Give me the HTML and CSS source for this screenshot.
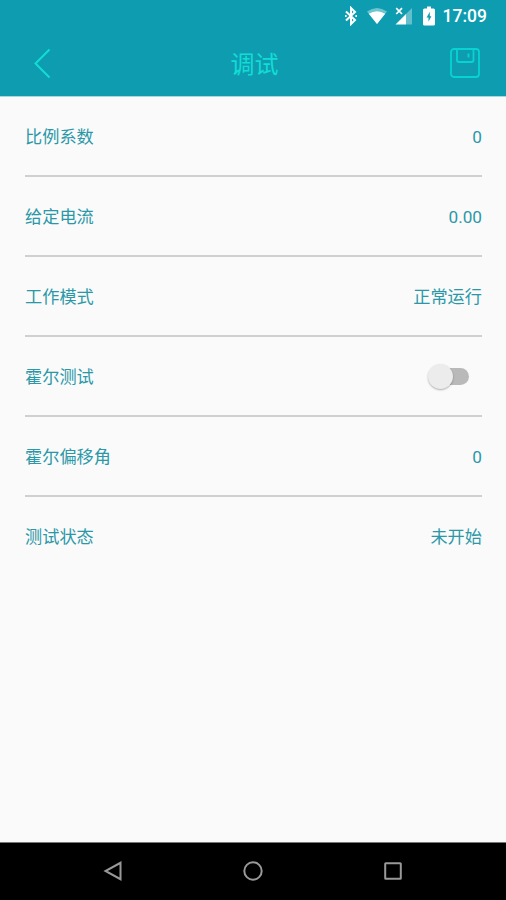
FILE: index.html
```html
<!DOCTYPE html>
<html lang="zh-CN">
<head>
    <meta charset="UTF-8">
    <meta name="viewport" content="width=device-width, initial-scale=1.0">
    <title>调试</title>
    <link rel="stylesheet" href="styles.css">
</head>
<body>

<header class="header">
    <div class="status-bar">
        <svg class="bluetooth" width="14" height="20" viewBox="0 0 14 20" fill="none" stroke="#fff" stroke-width="2">
            <path d="M2 5.5L11 14L7 18V2L11 6L2 14.5"/>
            <path d="M1 10h1.6M11.4 10H13" stroke-width="2.2"/>
        </svg>
        <svg class="wifi" width="22" height="18" viewBox="0 0 22 18" fill="#fff">
            <path d="M11 17L1 4.5Q11 -2.5 21 4.5Z" opacity="0.4"/>
            <path d="M11 17L2.8 6.8Q11 1.8 19.2 6.8Z"/>
        </svg>
        <svg class="signal" width="18" height="18" viewBox="0 0 18 18" fill="#fff">
            <path d="M17 1V17.5H11V7Z" opacity="0.35"/>
            <path d="M11 7V17.5H0.5Z"/>
            <path d="M1.2 1.2L7 7M7 1.2L1.2 7" stroke="#fff" stroke-width="1.7"/>
        </svg>
        <svg class="battery" width="12" height="20" viewBox="0 0 12 20">
            <path d="M4 0.5H8V2.5H10.5Q12 2.5 12 4V18Q12 19.5 10.5 19.5H1.5Q0 19.5 0 18V4Q0 2.5 1.5 2.5H4Z" fill="#fff"/>
            <path d="M6.8 5.8L3.6 11.6H5.5V15.8L8.4 10.2H6.8Z" fill="#0e9db0"/>
        </svg>
        <span class="time">17:09</span>
    </div>
    <div class="nav">
        <svg class="back" width="17" height="31" viewBox="0 0 17 31" fill="none" stroke="#12dcd6" stroke-width="2">
            <path d="M15.5 1.5L1.5 15.5L15.5 29.5"/>
        </svg>
        <h1>调试</h1>
        <svg class="save" width="30" height="30" viewBox="0 0 30 30" fill="none" stroke="#08d3d2" stroke-width="1.8">
            <rect x="1" y="1" width="28" height="28" rx="3"/>
            <path d="M7 1V12Q7 14 9 14H21.5Q23.5 14 23.5 12V1"/>
            <path d="M18.5 5.5V9.5"/>
        </svg>
    </div>
</header>

<main class="list">
    <div class="row">
        <span>比例系数</span>
        <span>0</span>
    </div>
    <div class="row">
        <span>给定电流</span>
        <span>0.00</span>
    </div>
    <div class="row">
        <span>工作模式</span>
        <span>正常运行</span>
    </div>
    <div class="row">
        <span>霍尔测试</span>
        <div class="switch"><div class="thumb"></div></div>
    </div>
    <div class="row">
        <span>霍尔偏移角</span>
        <span>0</span>
    </div>
    <div class="row">
        <span>测试状态</span>
        <span>未开始</span>
    </div>
</main>

<footer class="bottom-bar">
    <svg width="20" height="20" viewBox="0 0 20 20"><path d="M17.5 1.8V18.2L2.5 10Z"/></svg>
    <svg width="20" height="20" viewBox="0 0 20 20"><circle cx="10" cy="10" r="8.7"/></svg>
    <svg width="20" height="20" viewBox="0 0 20 20"><rect x="2.2" y="2.2" width="15.6" height="15.6" rx="0.5"/></svg>
</footer>

</body>
</html>
```
FILE: styles.css
```css
body {
    font-family: Roboto, "Noto Sans CJK SC", sans-serif;
    display: flex;
    flex-direction: column;
    height: 100vh;
    margin: 0;
    background-color: #fafafa;
}
.header {
    height: 97px;
    background-color: #0e9db0;
    border-bottom: 1px solid #a5d9e0;
    box-sizing: border-box;
}
.status-bar {
    display: flex;
    justify-content: flex-end;
    align-items: center;
    height: 31px;
    padding-right: 19px;
}
.wifi {
    margin-left: 8px;
}
.signal {
    margin-left: 7px;
}
.battery {
    margin-left: 10px;
}
.time {
    margin-left: 8px;
    padding-top: 2px;
    color: #fff;
    font-size: 17.5px;
    font-weight: 500;
    line-height: 29px;
}
.nav {
    display: flex;
    justify-content: space-between;
    align-items: center;
    height: 64px;
    padding: 0 26px 0 34px;
}
.nav h1 {
    margin: 0 0 0 8px;
    padding-top: 4px;
    color: #12dcd6;
    font-size: 24px;
    font-weight: 400;
    line-height: 60px;
}
.list {
    flex: 1;
    padding: 0 24px 0 25px;
}
.row {
    display: flex;
    justify-content: space-between;
    align-items: center;
    height: 80.1px;
    box-sizing: border-box;
    border-bottom: 2px solid #d0d0d0;
    color: #2b98a8;
    font-size: 17.2px;
    line-height: 26px;
}
.row:last-child {
    border-bottom-color: transparent;
}
.row span {
    padding-top: 1px;
}
.switch {
    position: relative;
    width: 34px;
    height: 17px;
    margin-right: 13px;
    border-radius: 9px;
    background-color: #b9b9b9;
}
.thumb {
    position: absolute;
    left: -7px;
    top: -4px;
    width: 25px;
    height: 25px;
    border-radius: 50%;
    background-color: #ececec;
    box-shadow: 0 1px 2px rgba(0,0,0,0.3);
}
.bottom-bar {
    display: flex;
    justify-content: center;
    align-items: center;
    gap: 120px;
    height: 58px;
    padding-bottom: 2px;
    background-color: #000;
    border-top: 1px solid #777;
    box-sizing: border-box;
}
.bottom-bar svg {
    fill: none;
    stroke: #999;
    stroke-width: 2;
}
```
